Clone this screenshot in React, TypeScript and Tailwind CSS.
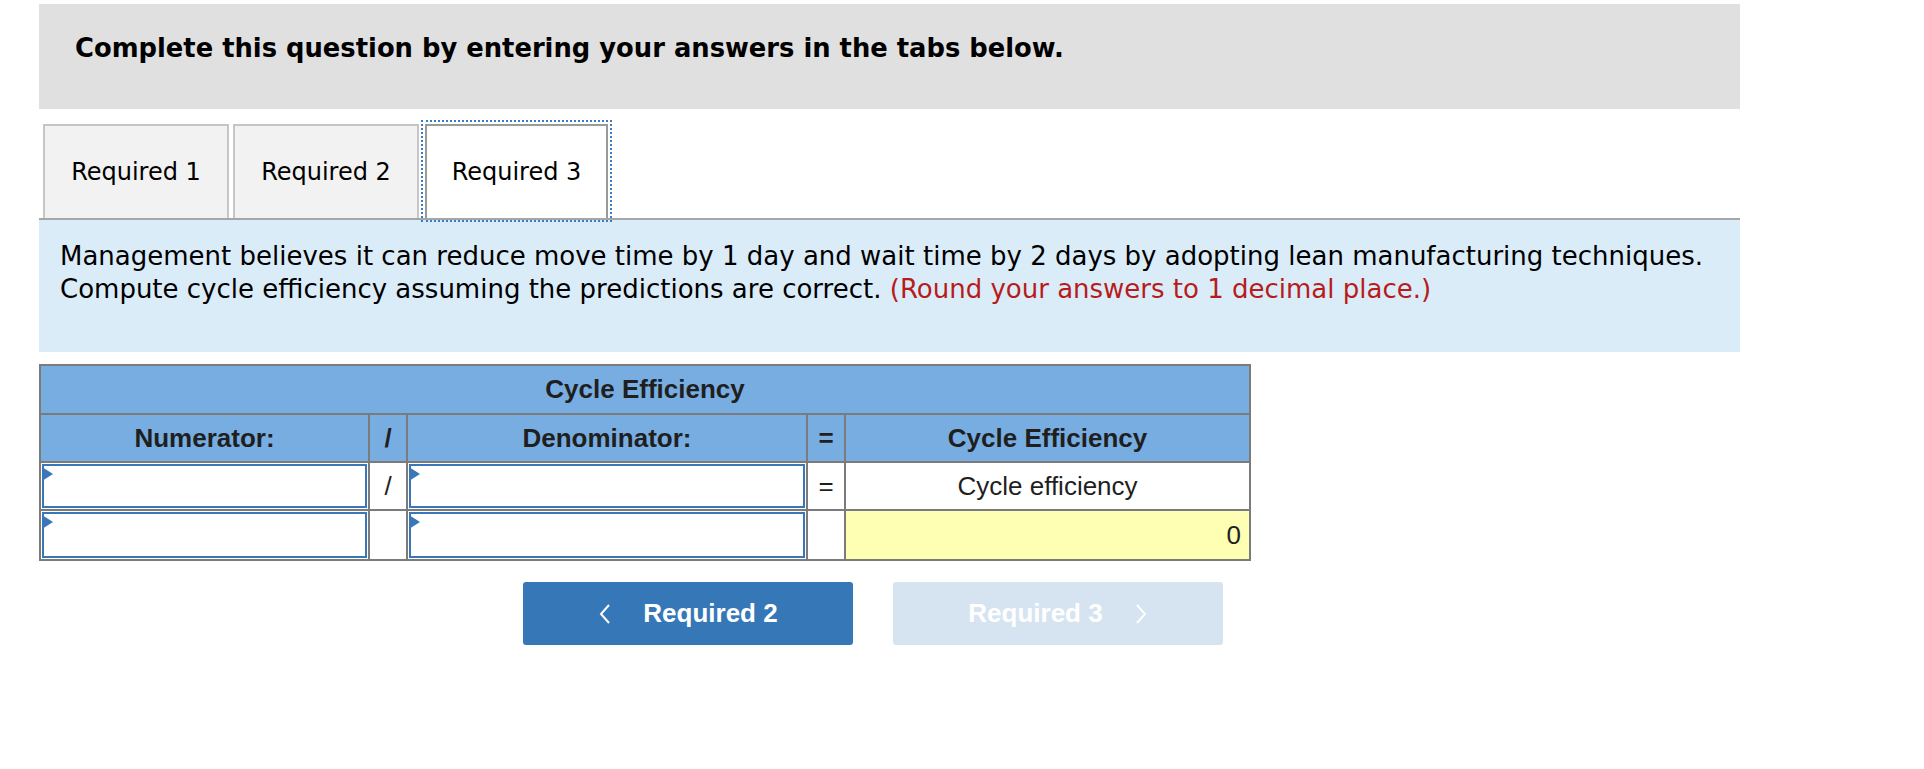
import React from 'react'

const tahoma = 'font-["DejaVu_Sans",Verdana,sans-serif]'
const arial = 'font-["Liberation_Sans",Arial,sans-serif]'

function InputBox({ h }: { h: string }) {
  return (
    <div className={`relative ${h} border-2 border-[#3a77b8] bg-white`}>
      <svg className="absolute -left-[2px] top-[1px]" width="11" height="14" viewBox="0 0 11 14">
        <polygon points="0,0 11,7 0,14" fill="#3a77b8" />
      </svg>
    </div>
  )
}

function Tab({ label, active }: { label: string; active?: boolean }) {
  if (active) {
    return (
      <div className="ml-[6px] flex h-[94px] w-[183px] items-center justify-center border-2 border-b-0 border-[#9a9a9a] bg-white text-[24px] text-black outline-2 outline-dotted outline-offset-2 outline-[#3a7cc2]">
        {label}
      </div>
    )
  }
  return (
    <div className="flex h-[94px] w-[186px] items-center justify-center border-2 border-b-0 border-[#c6c6c6] bg-[#f2f2f2] text-[24px] text-black">
      {label}
    </div>
  )
}

export default function App() {
  const cell = 'border-2 border-[#7b7b7b]'
  return (
    <div className="min-h-screen bg-white">
      <div className={`ml-[39px] w-[1701px] pt-[4px] ${tahoma}`}>
        {/* Instructions */}
        <div className="h-[105px] bg-[#e0e0e0] pl-[36px] pt-[29px] text-[25.8px] leading-[30px] font-bold text-black">
          Complete this question by entering your answers in the tabs below.
        </div>

        {/* Tabs */}
        <div className="mt-[15px] flex pl-[4px]">
          <Tab label="Required 1" />
          <div className="w-[4px]" />
          <Tab label="Required 2" />
          <Tab label="Required 3" active />
        </div>

        {/* Question */}
        <div className="h-[134px] border-t-2 border-[#a6a6a6] bg-[#dbecf9] pl-[21px] pt-[20px] text-[26px] leading-[33px] text-black whitespace-nowrap">
          Management believes it can reduce move time by 1 day and wait time by 2 days by adopting lean manufacturing techniques.
          <br />
          Compute cycle efficiency assuming the predictions are correct.{' '}
          <span className="text-[#b71c1c]">(Round your answers to 1 decimal place.)</span>
        </div>

        {/* Worksheet */}
        <table className={`mt-[12px] w-[1210px] table-fixed border-collapse ${arial} text-[26px] text-[#1f1f1f]`}>
          <colgroup>
            <col className="w-[329px]" />
            <col className="w-[38px]" />
            <col className="w-[400px]" />
            <col className="w-[38px]" />
            <col className="w-[405px]" />
          </colgroup>
          <tbody>
            <tr className="h-[49px] bg-[#78ade2]">
              <td colSpan={5} className={`${cell} text-center font-bold`}>Cycle Efficiency</td>
            </tr>
            <tr className="h-[48px] bg-[#78ade2] font-bold">
              <td className={`${cell} text-center`}>Numerator:</td>
              <td className={`${cell} text-center`}>/</td>
              <td className={`${cell} text-center`}>Denominator:</td>
              <td className={`${cell} text-center`}>=</td>
              <td className={`${cell} text-center`}>Cycle Efficiency</td>
            </tr>
            <tr className="h-[48px]">
              <td className={`${cell} p-[1px]`}><InputBox h="h-[44px]" /></td>
              <td className={`${cell} text-center`}>/</td>
              <td className={`${cell} p-[1px]`}><InputBox h="h-[44px]" /></td>
              <td className={`${cell} text-center`}>=</td>
              <td className={`${cell} text-center`}>Cycle efficiency</td>
            </tr>
            <tr className="h-[50px]">
              <td className={`${cell} p-[1px]`}><InputBox h="h-[46px]" /></td>
              <td className={cell}></td>
              <td className={`${cell} p-[1px]`}><InputBox h="h-[46px]" /></td>
              <td className={cell}></td>
              <td className={`${cell} bg-[#ffffb3] pr-[8px] text-right`}>0</td>
            </tr>
          </tbody>
        </table>

        {/* Navigation */}
        <div className={`mt-[21px] flex gap-[40px] pl-[484px] ${arial}`}>
          <button className="flex h-[63px] w-[330px] items-center justify-center gap-[32px] rounded-[3px] bg-[#3677b7] text-[26px] font-bold text-white">
            <svg width="13" height="20" viewBox="0 0 13 20">
              <polyline points="11,1 3,10 11,19" fill="none" stroke="white" strokeWidth="2" />
            </svg>
            Required 2
          </button>
          <button className="flex h-[63px] w-[330px] items-center justify-center gap-[32px] rounded-[3px] bg-[#d6e4f1] text-[26px] font-bold text-white">
            Required 3
            <svg width="13" height="20" viewBox="0 0 13 20">
              <polyline points="2,1 10,10 2,19" fill="none" stroke="white" strokeWidth="2" />
            </svg>
          </button>
        </div>
      </div>
    </div>
  )
}
